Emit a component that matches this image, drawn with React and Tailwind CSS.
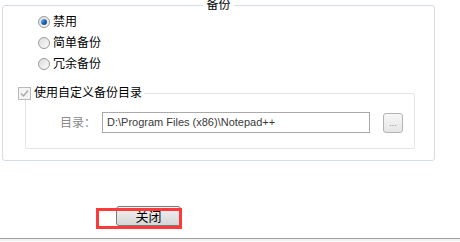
function Radio({ checked, label }) {
  return (
    <div className="flex h-[21px] items-center pl-[35px]">
      <span className="flex h-[12px] w-[12px] items-center justify-center rounded-full border border-[#9a9a9a] bg-gradient-to-br from-[#dcdcdc] to-[#fbfbfb]">
        {checked && (
          <span className="h-[6px] w-[6px] rounded-full bg-gradient-to-br from-[#7ec3f0] via-[#1c6fc0] to-[#0d3f7a]" />
        )}
      </span>
      <span className="ml-[3px] text-[12px] leading-none text-black">{label}</span>
    </div>
  )
}

export default function App() {
  return (
    <div className="relative h-[242px] w-[460px] overflow-hidden bg-white font-['Liberation_Sans','Noto_Sans_CJK_SC',sans-serif] text-black">
      <fieldset className="ml-[2px] w-[433px] rounded-[3px] border border-[#d5dde2] pb-[11px]">
        <legend className="mx-auto px-[3px] text-[12px] leading-[11px]">备份</legend>
        <Radio checked label="禁用" />
        <Radio label="简单备份" />
        <Radio label="冗余备份" />

        <fieldset className="ml-[22px] mt-[12px] w-[390px] rounded-[2px] border border-[#e2e5e8] pb-[15px]">
          <legend className="-ml-[8px] flex h-[14px] items-center pr-[2px]">
            <span className="flex h-[13px] w-[13px] items-center justify-center border border-[#b9b9b9] bg-[#f4f4f4]">
              <svg width="9" height="9" viewBox="0 0 9 9">
                <path d="M1 4.5 L3.5 7 L8 1.5" fill="none" stroke="#a8a8a8" strokeWidth="1.4" />
              </svg>
            </span>
            <span className="ml-[3px] text-[12px] leading-none">使用自定义备份目录</span>
          </legend>
          <div className="mt-[12px] flex items-center pl-[34px]">
            <span className="w-[42px] text-[12px] leading-none text-[#8a8a8a]">目录：</span>
            <div className="flex h-[21px] w-[268px] items-center border border-[#a9a9a9] pl-[4px] text-[11px] text-[#3a3a3a]">
              D:\Program Files (x86)\Notepad++
            </div>
            <div className="ml-[13px] flex h-[20px] w-[20px] items-end justify-center rounded-[3px] border border-[#b4b4b4] bg-gradient-to-b from-[#f6f6f6] to-[#e6e6e6] pb-[4px] text-[9px] leading-none text-[#8a8a8a]">
              ...
            </div>
          </div>
        </fieldset>
      </fieldset>

      <div className="mt-[45px] pl-[116px]">
        <button className="flex h-[20px] w-[65px] items-center justify-center rounded-[3px] border border-[#7a7a7a] bg-gradient-to-b from-[#f3f3f3] to-[#d6d6d6] text-[13px] leading-none text-black">
          关闭
        </button>
      </div>

      <div className="mt-[12px] h-[1px] w-full bg-[#a0a0a0]" />
      <div className="h-[2px] w-full bg-[#f2f2f2]" />

      <div className="absolute left-[96px] top-[208px] h-[21px] w-[86px] border-[3px] border-[#fd3a3a]" />
    </div>
  )
}
